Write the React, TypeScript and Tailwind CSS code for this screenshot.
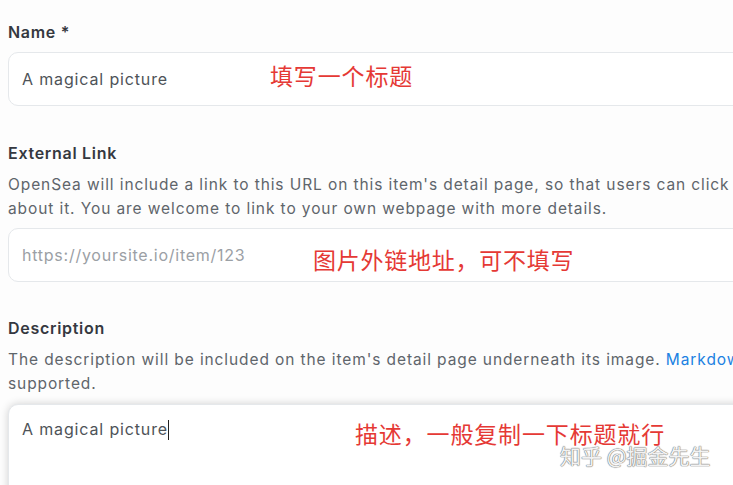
import React from "react";

const sans = { fontFamily: '"Inter", "Noto Sans", sans-serif' };
const cjk = { fontFamily: '"Noto Sans CJK SC", sans-serif' };

function Label({ children, className = "" }: { children: React.ReactNode; className?: string }) {
  return (
    <div className={`text-[16px] leading-6 font-semibold tracking-[0.7px] text-[#353840] ${className}`}>{children}</div>
  );
}

function Note({ children, className = "" }: { children: React.ReactNode; className?: string }) {
  return (
    <span className={`absolute text-[23px] leading-[30px] text-[#e53935] whitespace-nowrap ${className}`} style={cjk}>
      {children}
    </span>
  );
}

export default function App() {
  return (
    <div className="w-[733px] h-[485px] overflow-hidden bg-[#fdfdfd] relative" style={sans}>
      <div className="w-[800px] pl-2 pt-5 flex flex-col">
        <Label>Name *</Label>
        <div className="relative mt-2 h-[54px] rounded-[10px] border border-[#e5e8eb] bg-white flex items-center pl-[13px] text-[16px] tracking-[0.85px] text-[#4e5358]">
          A magical picture
          <Note className="left-[261px] top-[7px]">填写一个标题</Note>
        </div>

        <Label className="mt-[35px]">External Link</Label>
        <div className="mt-2 text-[15.5px] leading-6 tracking-[0.9px] text-[#5f656b] whitespace-nowrap">
          OpenSea will include a link to this URL on this item's detail page, so that users can click to learn more
          <br />
          about it. You are welcome to link to your own webpage with more details.
        </div>
        <div className="relative mt-[7px] h-[54px] rounded-[10px] border border-[#e5e8eb] bg-white flex items-center pl-[13px] text-[16px] tracking-[0.75px] text-[#9ba0a5]">
          https://yoursite.io/item/123
          <Note className="left-[304px] top-[15px]">图片外链地址，可不填写</Note>
        </div>

        <Label className="mt-[34px]">Description</Label>
        <div className="mt-2 text-[15.5px] leading-6 tracking-[0.9px] text-[#5f656b] whitespace-nowrap">
          The description will be included on the item's detail page underneath its image.{" "}
          <span className="text-[#2081e2]">Markdown</span> syntax is
          <br />
          supported.
        </div>
        <div className="relative mt-2 h-[120px] rounded-[10px] border border-[#e5e8eb] bg-white shadow-[0_0_8px_rgba(0,0,0,0.18)] pl-[13px] pt-[12px] text-[16px] tracking-[0.85px] text-[#4e5358]">
          <span>A magical picture</span>
          <span className="inline-block w-px h-[20px] bg-[#222] align-middle -mt-[2px]" />
          <Note className="left-[346px] top-[13px]">描述，一般复制一下标题就行</Note>
        </div>
      </div>
      <div
        className="absolute left-[560px] top-[440px] text-[21px] leading-[30px] text-[#f2f2f2] whitespace-nowrap"
        style={{ ...cjk, textShadow: "0 0 1px #777, 0 0 1px #777, 0 0 1px #999" }}
      >
        知乎 @掘金先生
      </div>
    </div>
  );
}
